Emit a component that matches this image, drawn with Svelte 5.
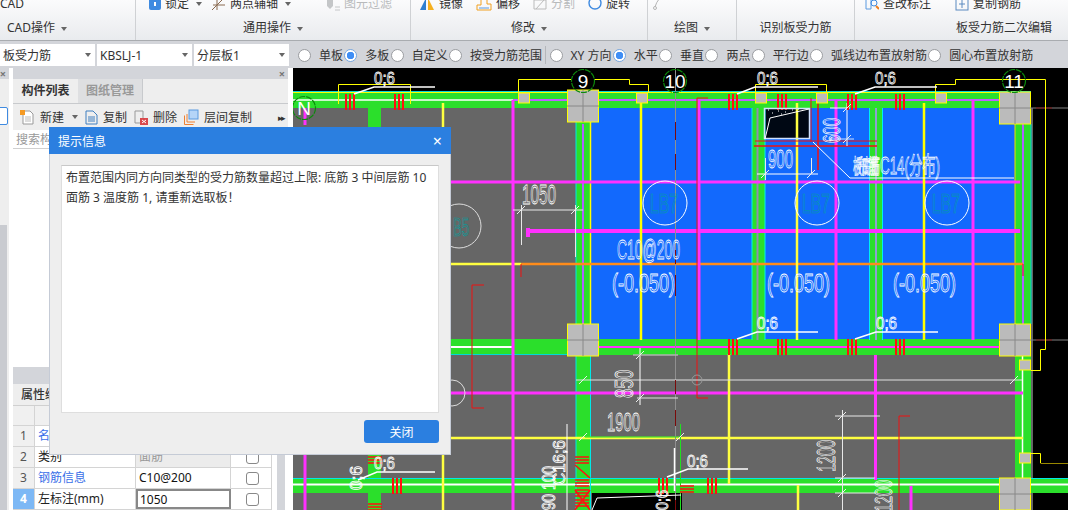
<script>
  const radios = [
    { label: '单板' }, { label: '多板', on: true }, { label: '自定义' }, { label: '按受力筋范围', sep: true },
    { label: 'XY 方向' }, { label: '水平', on: true }, { label: '垂直' }, { label: '两点' },
    { label: '平行边' }, { label: '弧线边布置放射筋' }, { label: '圆心布置放射筋' }
  ];

  const rows = [
    { n: 1, name: '名称', value: 'FJ-C10@200', link: true },
    { n: 2, name: '类别', value: '面筋', muted: true },
    { n: 3, name: '钢筋信息', value: 'C10@200', link: true },
    { n: 4, name: '左标注(mm)', value: '1050', active: true }
  ];

  // [x, y, w, h, fill]
  const rects = [
    [293, 108, 740, 402, '#666666'],
    [590, 108, 425, 232, '#1269fd'],
    [293, 91, 738, 2, '#00d8d8'],
    [293, 93, 738, 15, '#2bdf2b'],
    [293, 339, 738, 16, '#2bdf2b'],
    [293, 478, 775, 15, '#2bdf2b'],
    [576, 108, 14, 402, '#2bdf2b'],
    [752, 108, 13, 232, '#2bdf2b'],
    [869, 108, 14, 232, '#2bdf2b'],
    [1015, 108, 16, 402, '#2bdf2b'],
    [368, 108, 13, 20, '#2bdf2b'],
    [368, 455, 13, 55, '#2bdf2b'],
    [592, 493, 90, 17, '#000000'],
    [764, 108, 46, 31, '#000814']
  ];

  // [x1, y1, x2, y2, colour, width]
  const lines = [
    [293, 92.5, 1031, 92.5, '#ffff00', 1],
    [293, 100, 513, 100, '#ffffff', 1.5],
    [293, 347, 513, 347, '#ffffff', 2],
    [293, 484.5, 1068, 484.5, '#ffffff', 2],
    [293, 478.5, 1068, 478.5, '#00e8e8', 1],
    [293, 354.5, 576, 354.5, '#00d8d8', 1],
    [513, 100, 1023, 100, '#c060ff', 2],
    [598, 347, 1015, 347, '#ff30ff', 2],
    [576, 108, 576, 510, '#00e8e8', 1],
    [590.5, 108, 590.5, 340, '#ffff00', 1.5],
    [590.5, 354, 590.5, 510, '#00e8e8', 1],
    [583, 124, 583, 324, '#b060ff', 2],
    [752, 108, 752, 340, '#00f0f0', 1],
    [765, 108, 765, 340, '#00f0f0', 1],
    [757.5, 108, 757.5, 340, '#8f8fb0', 2],
    [869.5, 108, 869.5, 340, '#00f0f0', 1],
    [882.5, 108, 882.5, 340, '#00f0f0', 1],
    [876, 108, 876, 340, '#8f9fd0', 2],
    [1015, 124, 1015, 324, '#f0e000', 1],
    [1023, 108, 1023, 324, '#b060ff', 2],
    [1022.5, 355, 1022.5, 478, '#ffffff', 1.5],
    [1031, 124, 1031, 324, '#00d8d8', 1],
    [293, 182, 1020, 182, '#ff30ff', 3],
    [528, 231, 1020, 231, '#ff30ff', 4],
    [528, 228, 528, 237, '#ff30ff', 4],
    [293, 264, 521, 264, '#ffff40', 2.5],
    [521, 264, 1023, 264, '#ff8c1a', 2.5],
    [293, 393, 1023, 393, '#ff30ff', 3],
    [293, 438, 1023, 438, '#ffff40', 2.5],
    [513, 100, 513, 510, '#ff30ff', 3],
    [699, 100, 699, 340, '#ff30ff', 3],
    [836, 100, 836, 340, '#ff30ff', 3],
    [973, 100, 973, 340, '#ff30ff', 3],
    [875.5, 355, 875.5, 480, '#ff30ff', 3],
    [305, 108, 305, 125, '#ff30ff', 3],
    [305, 455, 305, 510, '#ff30ff', 3],
    [911, 486, 911, 510, '#ff30ff', 3],
    [641, 103, 641, 340, '#ffff00', 2.5],
    [797, 103, 797, 340, '#ffff40', 2.5],
    [924, 103, 924, 340, '#ffff00', 2.5],
    [729, 354, 729, 484, '#ffff40', 2.5],
    [443, 103, 443, 127, '#ffff40', 2.5],
    [443, 455, 443, 510, '#ffff40', 2.5],
    [798, 485, 798, 510, '#ffff40', 2.5],
    [675.5, 68, 675.5, 510, '#909090', 1],
    [472, 285, 472, 408, '#f01010', 1],
    [472, 285, 484, 285, '#f01010', 1],
    [472, 408, 484, 408, '#f01010', 1],
    [697, 98, 697, 398, '#f01010', 1],
    [697, 98, 708, 98, '#f01010', 1],
    [697, 398, 708, 398, '#f01010', 1],
    [521, 264, 521, 277, '#f01010', 1],
    [899, 416, 899, 510, '#f01010', 1],
    [899, 416, 910, 416, '#f01010', 1],
    [755, 141, 877, 141, '#f01010', 1],
    [754, 146, 877, 146, '#f01010', 1.5],
    [818, 100, 818, 170, '#f01010', 1.5],
    [811, 98, 811, 142, '#f01010', 1],
    [1023, 264, 1023, 276, '#f01010', 1],
    // dimensions
    [513, 210, 583, 210, '#e8e8e8', 1],
    [521.5, 205, 521.5, 245, '#e8e8e8', 1],
    [575.5, 205, 575.5, 257, '#e8e8e8', 1],
    [757, 174, 818, 174, '#ffffff', 1],
    [765.5, 158, 765.5, 180, '#e8e8e8', 1],
    [811.5, 158, 811.5, 174, '#e8e8e8', 1],
    [847, 103, 847, 146, '#ffffff', 1],
    [830, 108, 850, 108, '#ffffff', 1],
    [830, 139, 854, 139, '#ccddff', 1],
    [850, 178, 1014, 178, '#ffffff', 1],
    [813, 142, 850, 178, '#ffffff', 1],
    [576, 380, 1022, 380, '#e0e0e0', 1],
    [640, 348, 640, 405, '#ffffff', 1],
    [633, 355, 678, 355, '#b0b0b0', 1.5],
    [637, 398, 678, 398, '#e0e0e0', 1],
    [585, 437, 681, 437, '#20e020', 1],
    [680.5, 424, 680.5, 510, '#20e020', 1],
    [674.5, 448, 674.5, 491, '#ffffff', 1.5],
    [567, 424, 567, 510, '#ffffff', 1],
    [842.5, 410, 842.5, 510, '#e8e8e8', 1],
    [835, 416, 880, 416, '#e8e8e8', 1],
    [835, 478, 875, 478, '#e8e8e8', 1],
    [835, 493, 875, 493, '#e8e8e8', 1],
    [1031, 108, 1068, 108, '#808080', 1],
    [1036, 108, 1052, 108, '#7a0a0a', 1],
    [1031, 340, 1068, 340, '#808080', 1],
    [1036, 340, 1052, 340, '#7a0a0a', 1]
  ];

  const ticks = [[521, 210], [575, 210], [765, 174], [811, 174], [847, 108], [847, 139], [640, 355], [640, 398], [583, 380], [1014, 380], [842, 416], [842, 478], [842, 493], [680, 437], [583, 437]];
  const dashes = [[122, 140], [154, 170], [250, 264], [275, 296], [380, 394], [410, 426], [500, 510]];
  const bigColumns = [[567, 90], [567, 324], [999, 92], [999, 324], [999, 478]];
  const smallColumns = [[518, 93], [636, 93], [755, 93], [816, 93], [935, 93], [1019, 360], [1019, 453]];
  const rebarV = [
    [345, 94], [394, 94], [728, 94], [777, 94], [847, 94], [895, 94],
    [728, 339], [777, 339], [847, 339], [895, 339], [658, 478], [707, 478], [392, 478]
  ];
  const rebarH = [[368, 456], [368, 503], [575, 456], [575, 479], [575, 489], [575, 499], [680, 485]];
  const axes = [['9', 583, 81], ['10', 675, 81], ['11', 1014, 81], ['N', 304, 108]];
  const badges = [[665, 203, 'LB7'], [817, 203, 'LB7'], [947, 203, 'LB7']];
  const leaders = [
    ['354,94 374,87 435,87', 374, 84],
    ['737,94 755,87 818,87', 757, 84],
    ['855,94 875,87 937,87', 875, 84],
    ['737,339 757,332 818,332', 757, 329],
    ['855,339 876,332 938,332', 876, 329],
    ['667,477 688,469 748,469', 687, 467],
    ['358,480 377,472 435,472', 374, 469]
  ];
  const elevations = [612, 767, 893];
</script>

<div class="app">
  <header class="ribbon">
    <section class="group first">
      <div class="tools"><span class="tool">CAD</span></div>
      <div class="caption left">CAD操作 <i class="caret"></i></div>
    </section>
    <section class="group second">
      <div class="tools">
        <span class="tool">
          <svg width="12" height="14" viewBox="0 0 12 14"><rect y="1" width="12" height="12" rx="2" fill="#3f8ae0" /><rect x="5" y="5" width="2" height="4" fill="#fff" /></svg>
          锁定 <i class="caret"></i>
        </span>
        <span class="tool">
          <svg width="14" height="14" viewBox="0 0 14 14" fill="none" stroke="#8a6a50"><path d="M0 13 12 1M5 1v12M1 8h12" /></svg>
          两点辅轴 <i class="caret"></i>
        </span>
        <span class="tool off filter">
          <svg width="14" height="14" viewBox="0 0 14 14"><path d="M1 0h6v9l-3 3-3-3z" fill="#c4c6c8" /><path d="M9 10h5M9 13h5" stroke="#c4c6c8" /></svg>
          图元过滤
        </span>
      </div>
      <div class="caption">通用操作 <i class="caret"></i></div>
    </section>
    <section class="group third">
      <div class="tools">
        <span class="tool">
          <svg width="16" height="14" viewBox="0 0 16 14"><path d="M1 13 7 1v12z" fill="#2f7fd0" /><path d="M9 1l6 12H9z" fill="#f5b020" /></svg>
          镜像
        </span>
        <span class="tool">
          <svg width="16" height="14" viewBox="0 0 16 14" fill="none"><path d="M1 13V8h4V2h6v5h4v6z" stroke="#f0a020" /><path d="M3 11h10" stroke="#5a9ae0" /></svg>
          偏移
        </span>
        <span class="tool off">
          <svg width="14" height="14" viewBox="0 0 14 14" fill="none" stroke="#bbb"><path d="M1 3h12v9H1zM3 12l8-9" /></svg>
          分割
        </span>
        <span class="tool">
          <svg width="14" height="14" viewBox="0 0 14 14" fill="none"><circle cx="7" cy="6" r="6" stroke="#3f8ae0" stroke-width="1.4" /></svg>
          旋转
        </span>
      </div>
      <div class="caption">修改 <i class="caret"></i></div>
    </section>
    <section class="group fourth">
      <div class="tools">
        <svg width="12" height="14" viewBox="0 0 12 14" fill="none" stroke="#b5b5b5"><path d="M11 0Q5 0 2 10" /><circle cx="2" cy="11" r="1.5" /></svg>
      </div>
      <div class="caption">绘图 <i class="caret"></i></div>
    </section>
    <section class="group fifth">
      <div class="tools"></div>
      <div class="caption">识别板受力筋</div>
    </section>
    <section class="group sixth">
      <div class="tools">
        <span class="tool">
          <svg width="14" height="14" viewBox="0 0 14 14" fill="none"><path d="M1 0h5v12H1z" stroke="#5a9ae0" /><circle cx="9" cy="6" r="3" stroke="#3f8ae0" /><path d="M11 9l3 3" stroke="#f08020" stroke-width="2" /></svg>
          查改标注
        </span>
        <span class="tool">
          <svg width="14" height="14" viewBox="0 0 14 14" fill="none" stroke="#5a8ac0"><rect x="1" y="1" width="12" height="12" /><path d="M7 3v8M4 7h6" /></svg>
          复制钢筋
        </span>
      </div>
      <div class="caption right">板受力筋二次编辑</div>
    </section>
  </header>

  <div class="optionbar">
    <div class="combo">板受力筋<i class="caret"></i></div>
    <div class="combo">KBSLJ-1<i class="caret"></i></div>
    <div class="combo">分层板1<i class="caret"></i></div>
    <div class="radios">
      {#each radios as r}
        <label class="radio">
          <span class="dot" class:on={r.on}></span>
          <span>{r.label}</span>
        </label>
        {#if r.sep}<span class="sep"></span>{/if}
      {/each}
    </div>
  </div>

  <div class="workspace">
    <aside class="strip">
      <div class="paneltitle"><span class="x">×</span></div>
      <div class="stripicon"></div>
      <div class="stripscroll"></div>
    </aside>

    <aside class="panel">
      <div class="paneltitle"><span class="x">×</span></div>
      <div class="tabs">
        <span class="tab active">构件列表</span>
        <span class="tab">图纸管理</span>
      </div>
      <div class="actions">
        <span class="action">
          <svg width="15" height="15" viewBox="0 0 15 15" fill="none"><path d="M3 1h7l3 3v10H3z" stroke="#999" fill="#fff" /><path d="M5 7h6M5 9h6M5 11h6" stroke="#bbb" /><rect width="5" height="5" fill="#f59a23" /></svg>
          新建 <i class="caret"></i>
        </span>
        <span class="action">
          <svg width="13" height="15" viewBox="0 0 13 15" fill="none" stroke="#3f7fc0"><path d="M1 1h7l4 4v9H1zM3 7h7M3 9h7M3 11h7" /></svg>
          复制
        </span>
        <span class="action">
          <svg width="14" height="15" viewBox="0 0 14 15"><path d="M1 1h8v12H1z" fill="none" stroke="#999" /><rect x="6" y="8" width="8" height="7" fill="#d9484c" /><path d="M8 10l4 3M12 10l-4 3" stroke="#fff" /></svg>
          删除
        </span>
        <span class="action">
          <svg width="15" height="16" viewBox="0 0 15 16" fill="none"><path d="M.5 15.5v-9M.5 15.5h9M3 13V5M3 13h8" stroke="#f08030" /><rect x="5" y="1" width="9" height="9" fill="#b5d5f8" stroke="#5a9ae0" /></svg>
          层间复制
        </span>
        <span class="more">▸▸</span>
      </div>
      <div class="search">搜索构件...</div>
      <div class="list"></div>
      <div class="paneltitle low"></div>
      <div class="lower">
        <div class="propcol">
          <div class="proptabs"><span>属性编辑</span></div>
          <div class="row head"><span></span><span>属性名称</span><span>属性值</span><span>附加</span></div>
          {#each rows as r}
            <div class="row">
              <span class="num" class:active={r.active}>{r.n}</span>
              <span class="name" class:link={r.link}>{r.name}</span>
              <span class="val" class:muted={r.muted} class:active={r.active}>{r.value}</span>
              <span class="chk"><i></i></span>
            </div>
          {/each}
        </div>
        <div class="splitter"></div>
      </div>
    </aside>

    <div class="gutter"></div>

    <svg class="cad" viewBox="293 68 775 442" width="775" height="442">
      <rect x="293" y="68" width="775" height="442" fill="#000" />
      {#each rects as [x, y, w, h, fill]}
        <rect {x} {y} width={w} height={h} {fill} />
      {/each}
      {#each lines as [x1, y1, x2, y2, stroke, w]}
        <line {x1} {y1} {x2} {y2} {stroke} stroke-width={w} />
      {/each}
      {#each dashes as [a, b]}
        <line x1="675.5" y1={a} x2="675.5" y2={b} stroke="#7a0a0a" />
      {/each}

      <g fill="none" stroke="#ffff00">
        <path d="M338.5 104V84.5H410.5V104" />
        <path d="M518.5 92V79.5H571M594 79.5H629.5V84.5H648.5V92" />
        <path d="M755.5 92V84.5H826.5V92" />
        <path d="M935.5 92V84.5H955.5V79.5H1045.5V349.5H1040.5V370.5H1031" />
        <path d="M1031 453.5H1040.5V463" />
      </g>
      <path d="M1040.5 463.5H1068" stroke="#998800" fill="none" />

      {#each bigColumns as [x, y]}
        <rect x={x + 0.5} {y} width="31" height="32" fill="#bbbbbb" stroke="#ffff00" />
        <path d="M{x + 16} {y}v32M{x} {y + 16}h32" stroke="#888" />
      {/each}
      {#each smallColumns as [x, y]}
        <rect x={x + 0.5} {y} width="11" height="10" fill="#bbbbbb" stroke="#ffff00" />
      {/each}

      {#each rebarV as [x, y]}
        <path d="M{x + 1} {y}v16M{x + 5} {y}v16M{x + 9} {y}v16" stroke="#ff1010" stroke-width="2" />
      {/each}
      {#each rebarH as [x, y]}
        <path d="M{x} {y + 1}h14M{x} {y + 4}h14M{x} {y + 7}h14" stroke="#ff1010" stroke-width="1.6" />
      {/each}
      <path d="M575 465 590 478M590 490 575 510M575 490 590 510" stroke="#ff1010" stroke-width="1.6" fill="none" />

      {#each ticks as [x, y]}
        <line x1={x - 4} y1={y + 4} x2={x + 4} y2={y - 4} stroke="#eee" />
      {/each}

      {#each axes as [label, x, y]}
        <circle cx={x} cy={y} r="11.5" fill="none" stroke="#0c8a0c" stroke-width="1.2" stroke-dasharray="6 1" />
        <text class="axis" {x} y={y + 7} text-anchor="middle">{label}</text>
      {/each}

      {#each leaders as [points, x, y]}
        <polyline {points} fill="none" stroke="#fff" stroke-width="1.6" />
        <text class="cadtext" {x} {y} font-size="17" textLength="21" lengthAdjust="spacingAndGlyphs">0;6</text>
      {/each}

      <circle cx="459" cy="226" r="22" fill="none" stroke="#ddd" />
      <text class="tag" x="453" y="236" font-size="26" textLength="16" lengthAdjust="spacingAndGlyphs">B5</text>
      <circle cx="452" cy="393" r="13" fill="none" stroke="#ddd" />
      {#each badges as [cx, cy, label]}
        <circle {cx} {cy} r="22" fill="none" stroke="#fff" />
        <text class="tag" x={cx - 15} y={cy + 10} font-size="27" textLength="28" lengthAdjust="spacingAndGlyphs">{label}</text>
      {/each}
      <circle cx="697" cy="380" r="5" fill="none" stroke="#999" />

      <text class="cadtext" x="617" y="259" font-size="27" textLength="63" lengthAdjust="spacingAndGlyphs">C10@200</text>
      {#each elevations as x}
        <text class="cadtext" {x} y="292" font-size="25" textLength="63" lengthAdjust="spacingAndGlyphs">(-0.050)</text>
      {/each}
      <text class="cadtext" x="522" y="204" font-size="28" textLength="34" lengthAdjust="spacingAndGlyphs">1050</text>
      <text class="cadtext" x="768" y="168" font-size="26" textLength="25" lengthAdjust="spacingAndGlyphs">900</text>
      <text class="cadtext" x="607" y="431" font-size="26" textLength="33" lengthAdjust="spacingAndGlyphs">1900</text>
      <text class="cadtext" x="853" y="174" font-size="20" textLength="27" lengthAdjust="spacingAndGlyphs">板底筋</text>
      <text class="cadtext" x="857" y="174" font-size="20" textLength="22" lengthAdjust="spacingAndGlyphs">布筋</text>
      <text class="cadtext" x="880" y="174" font-size="24" textLength="60" lengthAdjust="spacingAndGlyphs">C14(分布)</text>
      <text class="cadtext" transform="translate(840 143) rotate(-90)" font-size="24" textLength="25" lengthAdjust="spacingAndGlyphs">600</text>
      <text class="cadtext" transform="translate(633 398) rotate(-90)" font-size="26" textLength="28" lengthAdjust="spacingAndGlyphs">850</text>
      <text class="cadtext" transform="translate(835 472) rotate(-90)" font-size="26" textLength="32" lengthAdjust="spacingAndGlyphs">1200</text>
      <text class="cadtext" transform="translate(892 512) rotate(-90)" font-size="24" textLength="32" lengthAdjust="spacingAndGlyphs">1200</text>
      <text class="cadtext" transform="translate(565 485) rotate(-90)" font-size="16" textLength="45" lengthAdjust="spacingAndGlyphs">C16;6</text>
      <text class="cadtext" transform="translate(555 510) rotate(-90)" font-size="18" textLength="44" lengthAdjust="spacingAndGlyphs">90 100</text>
      <text class="cadtext" transform="translate(362 490) rotate(-90)" font-size="16" textLength="24" lengthAdjust="spacingAndGlyphs">0;6</text>
      <text class="cadtext" transform="translate(668 510) rotate(-90)" font-size="16" textLength="20" lengthAdjust="spacingAndGlyphs">0;6</text>

      <rect x="764.5" y="108.5" width="45" height="30" fill="none" stroke="#cfe2ff" stroke-width="1.5" />
      <polyline points="765,139 770,118 809,109" fill="none" stroke="#fff" />
      <path d="M772 113h1M778 111h1M785 112h1M792 110h1M798 109h1M781 114h1M768 110h1" stroke="#fff" />
      <polyline points="592,510 597,498 681,495" fill="none" stroke="#fff" />
    </svg>
  </div>

  <div class="dialog">
    <div class="dialoghead">
      <span>提示信息</span>
      <span class="close">×</span>
    </div>
    <div class="dialogbody">
      <p>布置范围内同方向同类型的受力筋数量超过上限: 底筋 3 中间层筋 10<br />面筋 3 温度筋 1, 请重新选取板！</p>
    </div>
    <div class="dialogfoot">
      <button type="button">关闭</button>
    </div>
  </div>
</div>

<style>
  :global(body) {
    margin: 0;
    overflow: hidden;
  }

  .app {
    position: relative;
    width: 1068px;
    height: 510px;
    overflow: hidden;
    display: flex;
    flex-direction: column;
    font-family: "Noto Sans", "Noto Sans CJK SC", sans-serif;
    font-size: 12px;
    color: #333;
    background: #fff;
  }

  .caret {
    display: inline-block;
    width: 0;
    height: 0;
    border: 3.5px solid transparent;
    border-top: 4px solid #666;
    border-bottom: 0;
    vertical-align: middle;
    margin-left: 3px;
  }

  /* ribbon, its top is cut off by the screenshot */
  .ribbon {
    height: 41px;
    flex: none;
    box-sizing: border-box;
    display: flex;
    overflow: hidden;
    background: linear-gradient(#fbfbfc, #e9ebee);
    border-bottom: 1px solid #a9acb0;
  }

  .group {
    display: flex;
    flex-direction: column;
    border-right: 1px solid #cfd1d4;
    box-sizing: border-box;
  }

  .first { width: 136px; }
  .second { width: 275px; }
  .third { width: 237px; }
  .fourth { width: 89px; }
  .fifth { width: 118px; }
  .sixth { flex: 1; border-right: 0; }

  .tools {
    height: 20px;
    margin-top: -6px;
    display: flex;
    align-items: center;
    flex: none;
  }

  .second .tools { padding-left: 13px; gap: 10px; }
  .third .tools { padding-left: 8px; gap: 13px; }
  .fourth .tools { padding-left: 5px; }
  .sixth .tools { padding-left: 10px; gap: 24px; }

  .tool {
    display: inline-flex;
    align-items: center;
    gap: 4px;
    white-space: nowrap;
    line-height: 20px;
  }

  .tool .caret { margin-left: 3px; }

  .off { color: #b8babc; }
  .filter { margin-left: 25px; }

  .caption {
    text-align: center;
    line-height: 17px;
    margin-top: 5px;
  }

  .caption.left { text-align: left; padding-left: 7px; }
  .caption.right { text-align: right; padding-right: 16px; }

  /* option bar */
  .optionbar {
    height: 27px;
    flex: none;
    display: flex;
    align-items: center;
    gap: 2px;
    background: #d3d5da;
    box-sizing: border-box;
    padding: 2px 0 1px;
  }

  .combo {
    width: 95px;
    height: 22px;
    box-sizing: border-box;
    background: #fff;
    display: flex;
    align-items: center;
    justify-content: space-between;
    padding: 0 4px 0 3px;
    white-space: nowrap;
  }

  .radios {
    display: flex;
    align-items: center;
    gap: 1.3px;
    margin-left: 7px;
    white-space: nowrap;
  }

  .radio {
    display: flex;
    align-items: center;
    gap: 8px;
  }

  .dot {
    width: 13px;
    height: 13px;
    border-radius: 50%;
    background: #fff;
    border: 1px solid #9a9ca0;
    box-sizing: border-box;
    display: inline-block;
  }

  .dot.on {
    background: radial-gradient(circle, #3f8ef5 0 3.5px, #fff 4px);
    border-color: #7aa8df;
  }

  .sep {
    width: 1px;
    height: 18px;
    background: #b4b6ba;
    margin: 0 2px;
  }

  /* main area */
  .workspace {
    flex: 1;
    display: flex;
    min-height: 0;
  }

  .strip {
    width: 9px;
    flex: none;
    margin-right: 4px;
    background: #eeeeee;
    display: flex;
    flex-direction: column;
    overflow: hidden;
  }

  .paneltitle {
    height: 11px;
    flex: none;
    background: #d3d5da;
    display: flex;
    justify-content: flex-end;
    align-items: center;
    padding-right: 3px;
  }

  .paneltitle.low { height: 17px; }

  .x {
    color: #777;
    font-size: 11px;
    line-height: 11px;
    font-weight: 700;
  }

  .stripicon {
    margin: 28px 0 0 -6px;
    width: 12px;
    height: 16px;
    border: 1px solid #3f8ae0;
    border-radius: 2px;
    background: #fff;
  }

  .stripscroll {
    margin-top: 100px;
    flex: 1;
    width: 7px;
    background: #c9cbd0;
  }

  .panel {
    width: 275px;
    flex: none;
    display: flex;
    flex-direction: column;
    background: #eeeeee;
  }

  .tabs {
    height: 25px;
    flex: none;
    display: flex;
    border-bottom: 1px solid #c8cacd;
    box-sizing: border-box;
  }

  .tab {
    width: 64px;
    text-align: center;
    line-height: 24px;
    font-weight: 700;
    color: #999;
    background: #dedfe1;
    border-right: 1px solid #c8cacd;
  }

  .tab.active {
    background: #eeeeee;
    color: #333;
    border-right: 0;
    width: 65px;
  }

  .actions {
    height: 26px;
    flex: none;
    display: flex;
    align-items: center;
    padding-left: 7px;
    gap: 7px;
  }

  .action {
    display: inline-flex;
    align-items: center;
    gap: 5px;
    white-space: nowrap;
  }

  .more {
    margin-left: auto;
    margin-right: 4px;
    font-size: 9px;
    letter-spacing: -2px;
    color: #333;
  }

  .search {
    height: 19px;
    flex: none;
    background: #fff;
    color: #999;
    line-height: 19px;
    padding-left: 3px;
    border-bottom: 1px solid #d0d0d0;
    box-sizing: border-box;
  }

  .list {
    flex: 1;
    background: #fff;
  }

  .lower {
    flex: none;
    display: flex;
    background: #fff;
  }

  .propcol {
    width: 259px;
    flex: none;
  }

  .splitter {
    flex: 1;
    background: linear-gradient(90deg, #fff 0 5px, #d3d5da 5px 13px, #fff 13px);
  }

  .proptabs {
    height: 22px;
    line-height: 22px;
    padding-left: 8px;
    font-weight: 500;
    background: #eeeeee;
    border-bottom: 1px solid #d0d0d0;
    box-sizing: border-box;
  }

  .row {
    display: grid;
    grid-template-columns: 22px 101px 95px 1fr;
    height: 21px;
    box-sizing: border-box;
    border-bottom: 1px solid #d4d4d4;
    line-height: 20px;
  }

  .row > span {
    border-right: 1px solid #d4d4d4;
    box-sizing: border-box;
    padding-left: 3px;
    white-space: nowrap;
    overflow: hidden;
  }

  .row.head {
    height: 20px;
    background: #f0f0f0;
    color: #f0f0f0;
  }

  .num {
    background: #f0f0f0;
    text-align: center;
    padding-left: 0 !important;
    color: #555;
  }

  .num.active {
    background: #7db8f5;
    color: #fff;
    font-weight: 700;
  }

  .name { color: #222; }
  .name.link { color: #3a6fe8; }
  .val { color: #111; }

  .val.muted {
    background: #ececec;
    color: #999;
  }

  .val.active {
    border: 2px solid #888;
    line-height: 17px;
    padding-left: 2px;
  }

  .chk {
    display: flex;
    align-items: center;
    justify-content: center;
  }

  .chk i {
    width: 13px;
    height: 13px;
    border: 1px solid #888;
    border-radius: 3px;
    box-sizing: border-box;
  }

  .gutter {
    width: 5px;
    flex: none;
    background: #fff;
  }

  .cad {
    display: block;
    flex: none;
  }

  .cadtext {
    fill: none;
    stroke: #ffffff;
    stroke-width: 0.8;
    font-family: "Liberation Sans", "Noto Sans CJK SC", sans-serif;
  }

  .tag {
    fill: none;
    stroke: #00a0a0;
    stroke-width: 0.7;
    font-family: "Liberation Sans", sans-serif;
  }

  .axis {
    fill: #fff;
    font-size: 19px;
    font-family: "Liberation Sans", sans-serif;
  }

  /* modal sits over everything */
  .dialog {
    position: absolute;
    left: 49px;
    top: 127px;
    width: 402px;
    height: 328px;
    box-sizing: border-box;
    background: #eeeeee;
    border: 1px solid #c5cbd6;
    border-top: 0;
    display: flex;
    flex-direction: column;
  }

  .dialoghead {
    height: 27px;
    flex: none;
    margin: 0 -1px;
    padding: 0 9px;
    background: #2b7fe0;
    color: #fff;
    display: flex;
    justify-content: space-between;
    align-items: center;
  }

  .close {
    font-size: 16px;
    line-height: 16px;
  }

  .dialogbody {
    flex: 1;
    margin: 11px 11px 7px;
    background: #fff;
    border: 1px solid #dedede;
    border-top-color: #c8c8c8;
    padding: 2px 4px;
  }

  .dialogbody p {
    margin: 0;
    line-height: 20px;
    color: #333;
  }

  .dialogfoot {
    flex: none;
    display: flex;
    justify-content: flex-end;
    padding: 0 11px 11px;
  }

  .dialogfoot button {
    width: 75px;
    height: 23px;
    border: 0;
    border-radius: 3px;
    background: #2b7fe0;
    color: #fff;
    font: inherit;
    padding: 0;
  }
</style>
